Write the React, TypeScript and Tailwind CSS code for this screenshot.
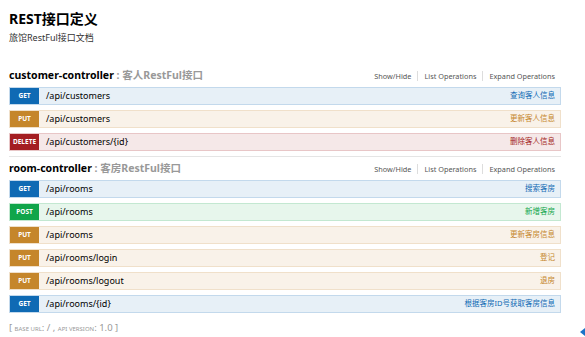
import React from 'react';

type Method = 'GET' | 'POST' | 'PUT' | 'DELETE';

interface Operation {
  method: Method;
  path: string;
  summary: string;
}

interface Resource {
  name: string;
  description: string;
  operations: Operation[];
}

const methodStyles: Record<Method, { row: string; badge: string; text: string }> = {
  GET: { row: 'bg-[#e7f0f7] border-[#c3d9ec]', badge: 'bg-[#0f6ab4]', text: 'text-[#0f6ab4]' },
  POST: { row: 'bg-[#e7f6ec] border-[#c3e8d1]', badge: 'bg-[#10a54a]', text: 'text-[#10a54a]' },
  PUT: { row: 'bg-[#f9f2e9] border-[#f0e0ca]', badge: 'bg-[#c5862b]', text: 'text-[#c5862b]' },
  DELETE: { row: 'bg-[#f5e8e8] border-[#e8c6c7]', badge: 'bg-[#a41e22]', text: 'text-[#a41e22]' },
};

const resources: Resource[] = [
  {
    name: 'customer-controller',
    description: '客人RestFul接口',
    operations: [
      { method: 'GET', path: '/api/customers', summary: '查询客人信息' },
      { method: 'PUT', path: '/api/customers', summary: '更新客人信息' },
      { method: 'DELETE', path: '/api/customers/{id}', summary: '删除客人信息' },
    ],
  },
  {
    name: 'room-controller',
    description: '客房RestFul接口',
    operations: [
      { method: 'GET', path: '/api/rooms', summary: '搜索客房' },
      { method: 'POST', path: '/api/rooms', summary: '新增客房' },
      { method: 'PUT', path: '/api/rooms', summary: '更新客房信息' },
      { method: 'PUT', path: '/api/rooms/login', summary: '登记' },
      { method: 'PUT', path: '/api/rooms/logout', summary: '退房' },
      { method: 'GET', path: '/api/rooms/{id}', summary: '根据客房ID号获取客房信息' },
    ],
  },
];

const OperationRow: React.FC<{ op: Operation }> = ({ op }) => {
  const s = methodStyles[op.method];
  return (
    <div className={`flex h-[18px] items-stretch border ${s.row}`}>
      <span className={`flex w-[29px] shrink-0 items-center justify-center text-[6.5px] font-bold text-white ${s.badge}`}>
        {op.method}
      </span>
      <span className="ml-[7px] flex items-center text-[9px] text-black">{op.path}</span>
      <span className={`ml-auto mr-[5px] flex items-center text-[7.5px] ${s.text}`}>{op.summary}</span>
    </div>
  );
};

const ResourceBlock: React.FC<{ resource: Resource; last: boolean }> = ({ resource, last }) => (
  <div className={last ? '' : 'border-b border-[#e5e5e5] pb-[5px]'}>
    <div className="flex h-[16px] items-center">
      <h2 className="text-[10.5px] font-bold text-black">
        {resource.name}
        <span className="text-[#999]"> : {resource.description}</span>
      </h2>
      <div className="ml-auto mr-[6px] flex items-center text-[7.3px] text-[#555]">
        <span className="border-r border-[#ddd] pr-[6px]">Show/Hide</span>
        <span className="border-r border-[#ddd] px-[6px]">List Operations</span>
        <span className="pl-[6px]">Expand Operations</span>
      </div>
    </div>
    <div className="mt-[3px] flex flex-col gap-[5px]">
      {resource.operations.map((op, i) => (
        <OperationRow key={i} op={op} />
      ))}
    </div>
  </div>
);

export default function App() {
  return (
    <div className="relative h-[337px] w-[585px] overflow-hidden bg-white font-['Noto_Sans','Noto_Sans_CJK_SC',sans-serif]">
      <div className="ml-[9px] w-[552px] pt-[9px]">
        <h1 className="text-[14px] font-bold leading-[20px] text-black">REST接口定义</h1>
        <p className="mt-[3px] text-[9px] leading-[12px] text-[#333]">旅馆RestFul接口文档</p>

        <div className="mt-[24px] flex flex-col gap-[4px]">
          {resources.map((r, i) => (
            <ResourceBlock key={r.name} resource={r} last={i === resources.length - 1} />
          ))}
        </div>

        <div className="mt-[8px] text-[9.5px] leading-[14px] text-[#999]">
          [ <span className="text-[6px] uppercase">base url</span>: / , <span className="text-[6px] uppercase">api version</span>: 1.0 ]
        </div>
      </div>

      <svg className="absolute right-0 top-[328px]" width="6" height="8" viewBox="0 0 6 8">
        <path d="M6 0 L1 4 L6 8 Z" fill="#1a73c8" />
      </svg>
    </div>
  );
}
